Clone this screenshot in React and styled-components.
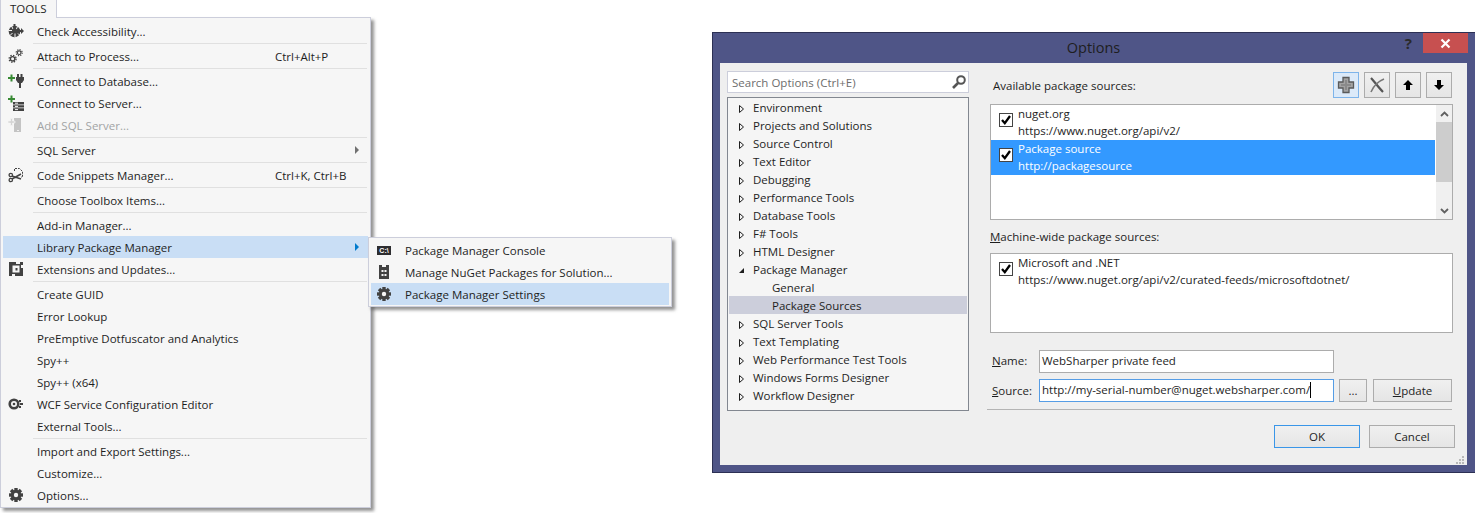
import styled, { createGlobalStyle } from "styled-components";

const GlobalStyle = createGlobalStyle`
  html, body {
    margin: 0;
    padding: 0;
    background: #fff;
  }
  body {
    font-family: "Open Sans", "Noto Sans", sans-serif;
    font-size: 11.5px;
    color: #1e1e1e;
  }
`;

const menuItems = [
    { label: "Check Accessibility...", icon: "access" },
    { sep: true },
    { label: "Attach to Process...", icon: "attach", shortcut: "Ctrl+Alt+P" },
    { sep: true },
    { label: "Connect to Database...", icon: "plug" },
    { label: "Connect to Server...", icon: "server" },
    { label: "Add SQL Server...", icon: "addsql", disabled: true },
    { sep: true },
    { label: "SQL Server", arrow: true },
    { sep: true },
    { label: "Code Snippets Manager...", icon: "snippet", shortcut: "Ctrl+K, Ctrl+B" },
    { sep: true },
    { label: "Choose Toolbox Items..." },
    { sep: true },
    { label: "Add-in Manager..." },
    { label: "Library Package Manager", arrow: true, active: true },
    { label: "Extensions and Updates...", icon: "extensions" },
    { sep: true },
    { label: "Create GUID" },
    { label: "Error Lookup" },
    { label: "PreEmptive Dotfuscator and Analytics" },
    { label: "Spy++" },
    { label: "Spy++ (x64)" },
    { label: "WCF Service Configuration Editor", icon: "wcf" },
    { label: "External Tools..." },
    { sep: true },
    { label: "Import and Export Settings..." },
    { label: "Customize..." },
    { label: "Options...", icon: "gear" },
];

const subItems = [
    { label: "Package Manager Console", icon: "console" },
    { label: "Manage NuGet Packages for Solution...", icon: "nuget" },
    { label: "Package Manager Settings", icon: "gear", active: true },
];

const treeItems = [
    { label: "Environment" },
    { label: "Projects and Solutions" },
    { label: "Source Control" },
    { label: "Text Editor" },
    { label: "Debugging" },
    { label: "Performance Tools" },
    { label: "Database Tools" },
    { label: "F# Tools" },
    { label: "HTML Designer" },
    { label: "Package Manager", open: true },
    { label: "General", child: true },
    { label: "Package Sources", child: true, selected: true },
    { label: "SQL Server Tools" },
    { label: "Text Templating" },
    { label: "Web Performance Test Tools" },
    { label: "Windows Forms Designer" },
    { label: "Workflow Designer" },
];

function Gear ( { color = "#424242" } ) {
    const teeth = [ 0, 45, 90, 135 ];
    return (
        <svg width="16" height="16" viewBox="0 0 16 16">
            { teeth.map( ( a ) => (
                <rect key={ a } x="6.3" y="1" width="3.4" height="14" fill={ color } transform={ `rotate(${ a } 8 8)` } />
            ) ) }
            <circle cx="8" cy="8" r="5.2" fill={ color } />
            <circle cx="8" cy="8" r="2.2" fill="#f6f6f6" />
        </svg>
    );
}

function MenuIcon ( { name } ) {
    switch ( name ) {
        case "access":
            return (
                <svg width="16" height="16" viewBox="0 0 16 16">
                    <circle cx="6.5" cy="8.500" r="5.800" fill="#424242" />
                    <path d="M1 7.500h3M2 12.500l2.500-2.500M7 14v-3.500M10 10.500l2 2" stroke="#f6f6f6" strokeWidth="1" />
                    <path d="M3.500 3l2 4M9.500 3.500L8 7" stroke="#f6f6f6" strokeWidth="1" />
                    <path d="M5.500 1h2v5h2L6.500 9l-3-3h2z" fill="#424242" />
                    <path d="M10 7h3V5l3 3-3 3V9h-3z" fill="#424242" />
                </svg>
            );
        case "attach":
            return (
                <svg width="16" height="16" viewBox="0 0 16 16" fill="none" stroke="#424242">
                    <circle cx="4.600" cy="10.800" r="2.200" strokeWidth="1.400" />
                    <circle cx="4.600" cy="10.800" r="3.500" strokeWidth="1.300" strokeDasharray="1.400 1.350" />
                    <circle cx="11.200" cy="4.700" r="1.800" strokeWidth="1.200" />
                    <circle cx="11.200" cy="4.700" r="3" strokeWidth="1.200" strokeDasharray="1.200 1.150" />
                </svg>
            );
        case "plug":
            return (
                <svg width="16" height="16" viewBox="0 0 16 16">
                    <path d="M0 4h2.500V1.500h2V4H7v2H4.500v2.500h-2V6H0z" fill="#388a34" />
                    <path d="M9 1h2v3h1.500V1h2v3H16v3l-2 3h-1v5h-2v-5h-1L8 7V4h1z" fill="#424242" />
                </svg>
            );
        case "server":
            return (
                <svg width="16" height="16" viewBox="0 0 16 16">
                    <path d="M0 3h2.500V.5h2V3H7v2H4.500v2.500h-2V5H0z" fill="#388a34" />
                    <path d="M5 7h11v2.500H5zM5 10.200h11v2.400H5zM5 13.300h11V16H5z" fill="#424242" />
                    <path d="M7 8.200h3M7 11.400h3M7 14.600h3" stroke="#f6f6f6" />
                </svg>
            );
        case "addsql":
            return (
                <svg width="16" height="16" viewBox="0 0 16 16">
                    <path d="M6 1h7v14H6z" fill="#c4c4c4" />
                    <path d="M0 4h2.500V1.500h2V4H7v2H4.500v2.500h-2V6H0z" fill="#d4d4d4" stroke="#f6f6f6" strokeWidth="0.600" />
                    <path d="M9 13h2v1H9z" fill="#f0f0f0" />
                </svg>
            );
        case "snippet":
            return (
                <svg width="16" height="16" viewBox="0 0 16 16" fill="none" stroke="#424242">
                    <path d="M6.500 4V1.500h5l3 3V10h-1.500" strokeWidth="1" strokeDasharray="2 1" />
                    <circle cx="2.800" cy="8" r="1.700" strokeWidth="1.300" />
                    <circle cx="2.800" cy="13" r="1.700" strokeWidth="1.300" />
                    <path d="M4 9l9 3M4 12l9-5" strokeWidth="1.500" />
                </svg>
            );
        case "extensions":
            return (
                <svg width="16" height="16" viewBox="0 0 16 16">
                    <path d="M1 1h14v14H1z" fill="#424242" />
                    <path d="M4.500 4.500h7v7h-7z" fill="#f6f6f6" />
                    <path d="M8 1h4v2H8zM13 4h2v3h-2zM4 13h3v2H4z" fill="#f6f6f6" />
                    <path d="M7.500 7h2v2.500h-2z" fill="#424242" />
                </svg>
            );
        case "wcf":
            return (
                <svg width="16" height="16" viewBox="0 0 16 16" fill="none">
                    <circle cx="6" cy="8" r="4.300" stroke="#424242" strokeWidth="2.600" />
                    <circle cx="6" cy="8" r="1.300" fill="#424242" />
                    <path d="M11 4h2v2h-2zM12 7h3v2h-3zM11 10h2v2h-2z" fill="#424242" />
                </svg>
            );
        case "gear":
            return <Gear />;
        case "console":
            return (
                <svg width="16" height="16" viewBox="0 0 16 16">
                    <path d="M1 4h14v9H1z" fill="#2d2d30" />
                    <text x="8" y="11" fontSize="7" fontWeight="700" textAnchor="middle" fill="#fff" fontFamily="Liberation Sans, sans-serif">C:\</text>
                </svg>
            );
        case "nuget":
            return (
                <svg width="16" height="16" viewBox="0 0 16 16">
                    <path d="M3 1h3v2h4V1h3v14H3z" fill="#424242" />
                    <path d="M5.500 6h2v2h-2zM8.500 6h2v2h-2zM5.500 10h2v2h-2zM8.500 10h2v2h-2z" fill="#f6f6f6" />
                </svg>
            );
        default:
            return null;
    }
}

function TreeToggle ( { open } ) {
    return (
        <TreeArrow width="14" height="14" viewBox="0 0 14 14">
            { open
                ? <path d="M0 11h5V6z" fill="#1e1e1e" />
                : <path d="M.5 5.500L4.500 9 .5 12.500z" fill="none" stroke="#1e1e1e" /> }
        </TreeArrow>
    );
}

function Check () {
    return (
        <CheckBox>
            <svg width="12" height="12" viewBox="0 0 12 12">
                <path d="M2 6l2.800 3.200L10 2" fill="none" stroke="#000" strokeWidth="2.300" />
            </svg>
        </CheckBox>
    );
}

function SourceItem ( { title, url, selected } ) {
    return (
        <SourceRow $selected={ selected }>
            <Check />
            <SourceText>
                <SourceLine>{ title }</SourceLine>
                <SourceLine>{ url }</SourceLine>
            </SourceText>
        </SourceRow>
    );
}

function App () {
    return (
        <Page>
            <GlobalStyle />
            <MenuArea>
                <MenuTab>TOOLS</MenuTab>
                <Menu>
                    { menuItems.map( ( item, i ) => item.sep ? (
                        <MenuSep key={ i } />
                    ) : (
                        <MenuRow key={ i } $active={ item.active } $disabled={ item.disabled }>
                            <IconSlot><MenuIcon name={ item.icon } /></IconSlot>
                            <MenuLabel>{ item.label }</MenuLabel>
                            { item.shortcut && <Shortcut>{ item.shortcut }</Shortcut> }
                            { item.arrow && <SubArrow $active={ item.active } /> }
                        </MenuRow>
                    ) ) }
                </Menu>
                <SubMenu>
                    { subItems.map( ( item ) => (
                        <SubRow key={ item.label } $active={ item.active }>
                            <IconSlot><MenuIcon name={ item.icon } /></IconSlot>
                            <MenuLabel>{ item.label }</MenuLabel>
                        </SubRow>
                    ) ) }
                </SubMenu>
            </MenuArea>

            <Dialog>
                <TitleBar>
                    Options
                    <HelpMark>?</HelpMark>
                    <CloseButton>
                        <svg width="11" height="11" viewBox="0 0 11 11">
                            <path d="M1.500 1.500l8 8M9.500 1.500l-8 8" stroke="#fff" strokeWidth="2.200" />
                        </svg>
                    </CloseButton>
                </TitleBar>
                <DialogBody>
                    <LeftColumn>
                        <SearchBox>
                            Search Options (Ctrl+E)
                            <svg width="16" height="16" viewBox="0 0 16 16" fill="none" stroke="#555">
                                <circle cx="10" cy="6" r="3.800" strokeWidth="2" />
                                <path d="M7 9l-5 5" strokeWidth="2.600" />
                            </svg>
                        </SearchBox>
                        <Tree>
                            { treeItems.map( ( item ) => (
                                <TreeRow key={ item.label } $child={ item.child } $selected={ item.selected }>
                                    { !item.child && <TreeToggle open={ item.open } /> }
                                    { item.label }
                                </TreeRow>
                            ) ) }
                        </Tree>
                    </LeftColumn>

                    <RightColumn>
                        <SourcesHeader>
                            <HeaderLabel>Available package sources:</HeaderLabel>
                            <ToolButton $focus>
                                <svg width="18" height="18" viewBox="0 0 18 18">
                                    <path d="M6 1.500h6v4.500h4.500v6H12v4.500H6V12H1.500V6H6z" fill="#a3a3a3" stroke="#5a5a5a" strokeWidth="1.300" />
                                    <path d="M9 4v10M4 9h10" stroke="#8a8a8a" strokeWidth="2" />
                                </svg>
                            </ToolButton>
                            <ToolButton>
                                <svg width="16" height="16" viewBox="0 0 16 16" fill="none">
                                    <path d="M2 1c3 3 7 9 12 14" stroke="#555" strokeWidth="2.200" />
                                    <path d="M15 2C10 4 5 8 2 15" stroke="#777" strokeWidth="1.600" />
                                </svg>
                            </ToolButton>
                            <ToolButton>
                                <svg width="10" height="10" viewBox="0 0 10 10"><path d="M5 0l5 5H7v5H3V5H0z" fill="#000" /></svg>
                            </ToolButton>
                            <ToolButton>
                                <svg width="10" height="10" viewBox="0 0 10 10"><path d="M5 10l5-5H7V0H3v5H0z" fill="#000" /></svg>
                            </ToolButton>
                        </SourcesHeader>

                        <SourceList>
                            <SourceItems>
                                <SourceItem title="nuget.org" url="https://www.nuget.org/api/v2/" />
                                <SourceItem title="Package source" url="http://packagesource" selected />
                            </SourceItems>
                            <ScrollBar>
                                <ScrollArrow>
                                    <svg width="9" height="6" viewBox="0 0 9 6"><path d="M1 5l3.500-3.500L8 5" fill="none" stroke="#606060" strokeWidth="1.800" /></svg>
                                </ScrollArrow>
                                <ScrollThumb />
                                <ScrollArrow $end>
                                    <svg width="9" height="6" viewBox="0 0 9 6"><path d="M1 1l3.500 3.500L8 1" fill="none" stroke="#606060" strokeWidth="1.800" /></svg>
                                </ScrollArrow>
                            </ScrollBar>
                        </SourceList>

                        <MachineLabel><u>M</u>achine-wide package sources:</MachineLabel>
                        <MachineList>
                            <SourceItem title="Microsoft and .NET" url="https://www.nuget.org/api/v2/curated-feeds/microsoftdotnet/" />
                        </MachineList>

                        <FieldRow>
                            <FieldLabel $raised><u>N</u>ame:</FieldLabel>
                            <FieldInput>WebSharper private feed</FieldInput>
                        </FieldRow>
                        <FieldRow $source>
                            <FieldLabel><u>S</u>ource:</FieldLabel>
                            <FieldInput $focus>http://my-serial-number@nuget.websharper.com/<Caret /></FieldInput>
                            <BrowseButton>...</BrowseButton>
                            <UpdateButton><u>U</u>pdate</UpdateButton>
                        </FieldRow>
                        <Divider />
                        <DialogActions>
                            <ActionButton $primary>OK</ActionButton>
                            <ActionButton>Cancel</ActionButton>
                        </DialogActions>
                    </RightColumn>
                    <Grip>
                        <svg width="10" height="10" viewBox="0 0 10 10" fill="#b8b8b8">
                            <path d="M7 1h2v2H7zM4 4h2v2H4zM7 4h2v2H7zM1 7h2v2H1zM4 7h2v2H4zM7 7h2v2H7z" />
                        </svg>
                    </Grip>
                </DialogBody>
            </Dialog>
        </Page>
    );
}

const Page = styled.div`
  display: flex;
  width: 1475px;
  height: 513px;
  overflow: hidden;
  background: #fff;
`;

const MenuArea = styled.div`
  position: relative;
  flex: 0 0 712px;
`;

const MenuTab = styled.div`
  box-sizing: border-box;
  width: 57px;
  height: 18px;
  margin-bottom: -1px;
  position: relative;
  z-index: 1;
  padding-left: 9px;
  line-height: 17px;
  background: #f6f6f6;
  border: 1px solid #cccedb;
  border-top: 0;
  border-bottom: 0;
`;

const Menu = styled.div`
  box-sizing: border-box;
  width: 371px;
  height: 491px;
  padding: 2px;
  background: #f6f6f6;
  border: 1px solid #cccedb;
  box-shadow: 3px 3px 3px rgba(60, 60, 60, 0.55);
`;

const MenuSep = styled.div`
  height: 1px;
  margin: 1px 1px 1px 30px;
  background: #e0e0e0;
`;

const MenuRow = styled.div`
  display: flex;
  align-items: center;
  height: 22px;
  color: ${ ( p ) => ( p.$disabled ? "#a2a4a5" : "#1e1e1e" ) };
  background: ${ ( p ) => ( p.$active ? "#c9def5" : "transparent" ) };
`;

const IconSlot = styled.span`
  display: flex;
  flex: 0 0 34px;
  padding-left: 5px;
  box-sizing: border-box;
`;

const MenuLabel = styled.span`
  flex: 1;
  white-space: nowrap;
`;

const Shortcut = styled.span`
  flex: 0 0 93px;
  white-space: nowrap;
`;

const SubArrow = styled.span`
  width: 0;
  height: 0;
  margin-right: 9px;
  border-left: 4px solid ${ ( p ) => ( p.$active ? "#007acc" : "#717171" ) };
  border-top: 4px solid transparent;
  border-bottom: 4px solid transparent;
`;

const SubMenu = styled.div`
  position: absolute;
  left: 368px;
  top: 237px;
  box-sizing: border-box;
  width: 304px;
  height: 70px;
  padding: 1px 2px;
  background: #f6f6f6;
  border: 1px solid #cccedb;
  box-shadow: 3px 3px 3px rgba(60, 60, 60, 0.55);
`;

const SubRow = styled.div`
  display: flex;
  align-items: center;
  height: 22px;
  background: ${ ( p ) => ( p.$active ? "#c9def5" : "transparent" ) };
`;

const Dialog = styled.div`
  box-sizing: border-box;
  display: flex;
  flex-direction: column;
  flex: 1;
  height: 441px;
  margin-top: 32px;
  padding: 0 8px 7px 7px;
  background: #4f5587;
  border-top: 1px solid #2c3054;
  border-left: 1px solid #2c3054;
  border-bottom: 1px solid #2c3054;
`;

const TitleBar = styled.div`
  position: relative;
  display: flex;
  align-items: center;
  justify-content: center;
  box-sizing: border-box;
  height: 30px;
  padding-bottom: 2px;
  font-size: 14.5px;
  color: #1e1e1e;
`;

const HelpMark = styled.span`
  position: absolute;
  right: 55px;
  top: 0;
  font-size: 15px;
  font-weight: 700;
  line-height: 21px;
  color: #2a2a2a;
`;

const CloseButton = styled.span`
  position: absolute;
  right: -1px;
  top: 0;
  display: flex;
  align-items: center;
  justify-content: center;
  width: 45px;
  height: 20px;
  background: #c75050;
`;

const DialogBody = styled.div`
  position: relative;
  display: flex;
  flex: 1;
  padding: 8px 14px 0 7px;
  background: #efefef;
`;

const LeftColumn = styled.div`
  display: flex;
  flex-direction: column;
  gap: 4px;
  flex: 0 0 242px;
  height: 340px;
`;

const SearchBox = styled.div`
  box-sizing: border-box;
  display: flex;
  align-items: center;
  justify-content: space-between;
  height: 22px;
  padding: 0 1px 0 4px;
  color: #6d6d6d;
  background: #fff;
  border: 1px solid #cccedb;
`;

const Tree = styled.div`
  box-sizing: border-box;
  height: 314px;
  padding: 0 1px;
  background: #f5f5f5;
  border: 1px solid #828790;
`;

const TreeRow = styled.div`
  display: flex;
  align-items: center;
  height: 18px;
  padding-left: ${ ( p ) => ( p.$child ? "43px" : "10px" ) };
  background: ${ ( p ) => ( p.$selected ? "#cccedb" : "transparent" ) };
  color: #1e1e1e;
`;

const TreeArrow = styled.svg`
  flex: 0 0 14px;
`;

const RightColumn = styled.div`
  display: flex;
  flex-direction: column;
  flex: 1;
  min-width: 0;
  margin-left: 21px;
`;

const SourcesHeader = styled.div`
  display: flex;
  align-items: center;
  gap: 5px;
  height: 26px;
  margin: 1px 1px 6px 3px;
`;

const HeaderLabel = styled.span`
  flex: 1;
`;

const ToolButton = styled.span`
  box-sizing: border-box;
  display: flex;
  align-items: center;
  justify-content: center;
  width: 26px;
  height: 26px;
  background: ${ ( p ) => ( p.$focus ? "#dceaf9" : "linear-gradient(#f0f0f0, #e5e5e5)" ) };
  border: 1px solid ${ ( p ) => ( p.$focus ? "#7eb4ea" : "#acacac" ) };
`;

const SourceList = styled.div`
  box-sizing: border-box;
  display: flex;
  height: 116px;
  background: #fff;
  border: 1px solid #acacac;
`;

const SourceItems = styled.div`
  flex: 1;
  min-width: 0;
`;

const SourceRow = styled.div`
  display: flex;
  align-items: flex-start;
  height: 35px;
  padding-left: 8px;
  color: ${ ( p ) => ( p.$selected ? "#fff" : "#1e1e1e" ) };
  background: ${ ( p ) => ( p.$selected ? "#3399ff" : "transparent" ) };
`;

const CheckBox = styled.span`
  box-sizing: border-box;
  display: flex;
  align-items: center;
  justify-content: center;
  width: 14px;
  height: 14px;
  margin-top: 8px;
  background: #fff;
  border: 1px solid #444;
`;

const SourceText = styled.div`
  margin-left: 5px;
`;

const SourceLine = styled.div`
  height: 17px;
  line-height: 17px;
  white-space: nowrap;
`;

const ScrollBar = styled.div`
  display: flex;
  flex-direction: column;
  flex: 0 0 16px;
  margin-left: 1px;
  background: #f0f0f0;
`;

const ScrollArrow = styled.span`
  display: flex;
  align-items: center;
  justify-content: center;
  height: 17px;
  margin-top: ${ ( p ) => ( p.$end ? "auto" : "0" ) };
`;

const ScrollThumb = styled.span`
  height: 60px;
  background: #cdcdcd;
`;

const MachineLabel = styled.div`
  height: 17px;
  margin-top: 8px;
  line-height: 17px;
`;

const MachineList = styled.div`
  box-sizing: border-box;
  height: 80px;
  margin-top: 8px;
  margin-bottom: 17px;
  background: #fff;
  border: 1px solid #acacac;
`;

const FieldRow = styled.div`
  display: flex;
  align-items: center;
  height: 23px;
  margin-top: ${ ( p ) => ( p.$source ? "6px" : "0" ) };
`;

const FieldLabel = styled.span`
  flex: 0 0 49px;
  padding-left: 2px;
  padding-bottom: ${ ( p ) => ( p.$raised ? "2px" : "0" ) };
  box-sizing: border-box;
`;

const FieldInput = styled.div`
  box-sizing: border-box;
  display: flex;
  align-items: center;
  width: 295px;
  height: 23px;
  padding: 0 0 2px 2px;
  white-space: nowrap;
  background: #fff;
  border: 1px solid ${ ( p ) => ( p.$focus ? "#569de5" : "#acacac" ) };
`;

const Caret = styled.span`
  display: inline-block;
  width: 1px;
  height: 16px;
  background: #000;
`;

const DialogButton = styled.span`
  box-sizing: border-box;
  display: flex;
  align-items: center;
  justify-content: center;
  height: 23px;
  background: linear-gradient(#f0f0f0, #e5e5e5);
  border: 1px solid #acacac;
`;

const BrowseButton = styled( DialogButton )`
  width: 28px;
  margin-left: 5px;
`;

const UpdateButton = styled( DialogButton )`
  width: 79px;
  margin-left: 6px;
`;

const Divider = styled.div`
  height: 1px;
  margin: 7px 1px 0 -3px;
  background: #b4b4b4;
`;

const DialogActions = styled.div`
  display: flex;
  justify-content: flex-end;
  gap: 9px;
  margin: 15px -2px 0 0;
`;

const ActionButton = styled.span`
  box-sizing: border-box;
  display: flex;
  align-items: center;
  justify-content: center;
  width: 86px;
  height: 23px;
  background: linear-gradient(#f0f0f0, #e5e5e5);
  border: 1px solid ${ ( p ) => ( p.$primary ? "#3a96e8" : "#acacac" ) };
`;

const Grip = styled.span`
  position: absolute;
  right: 2px;
  bottom: 0;
  display: flex;
`;

export default App;
